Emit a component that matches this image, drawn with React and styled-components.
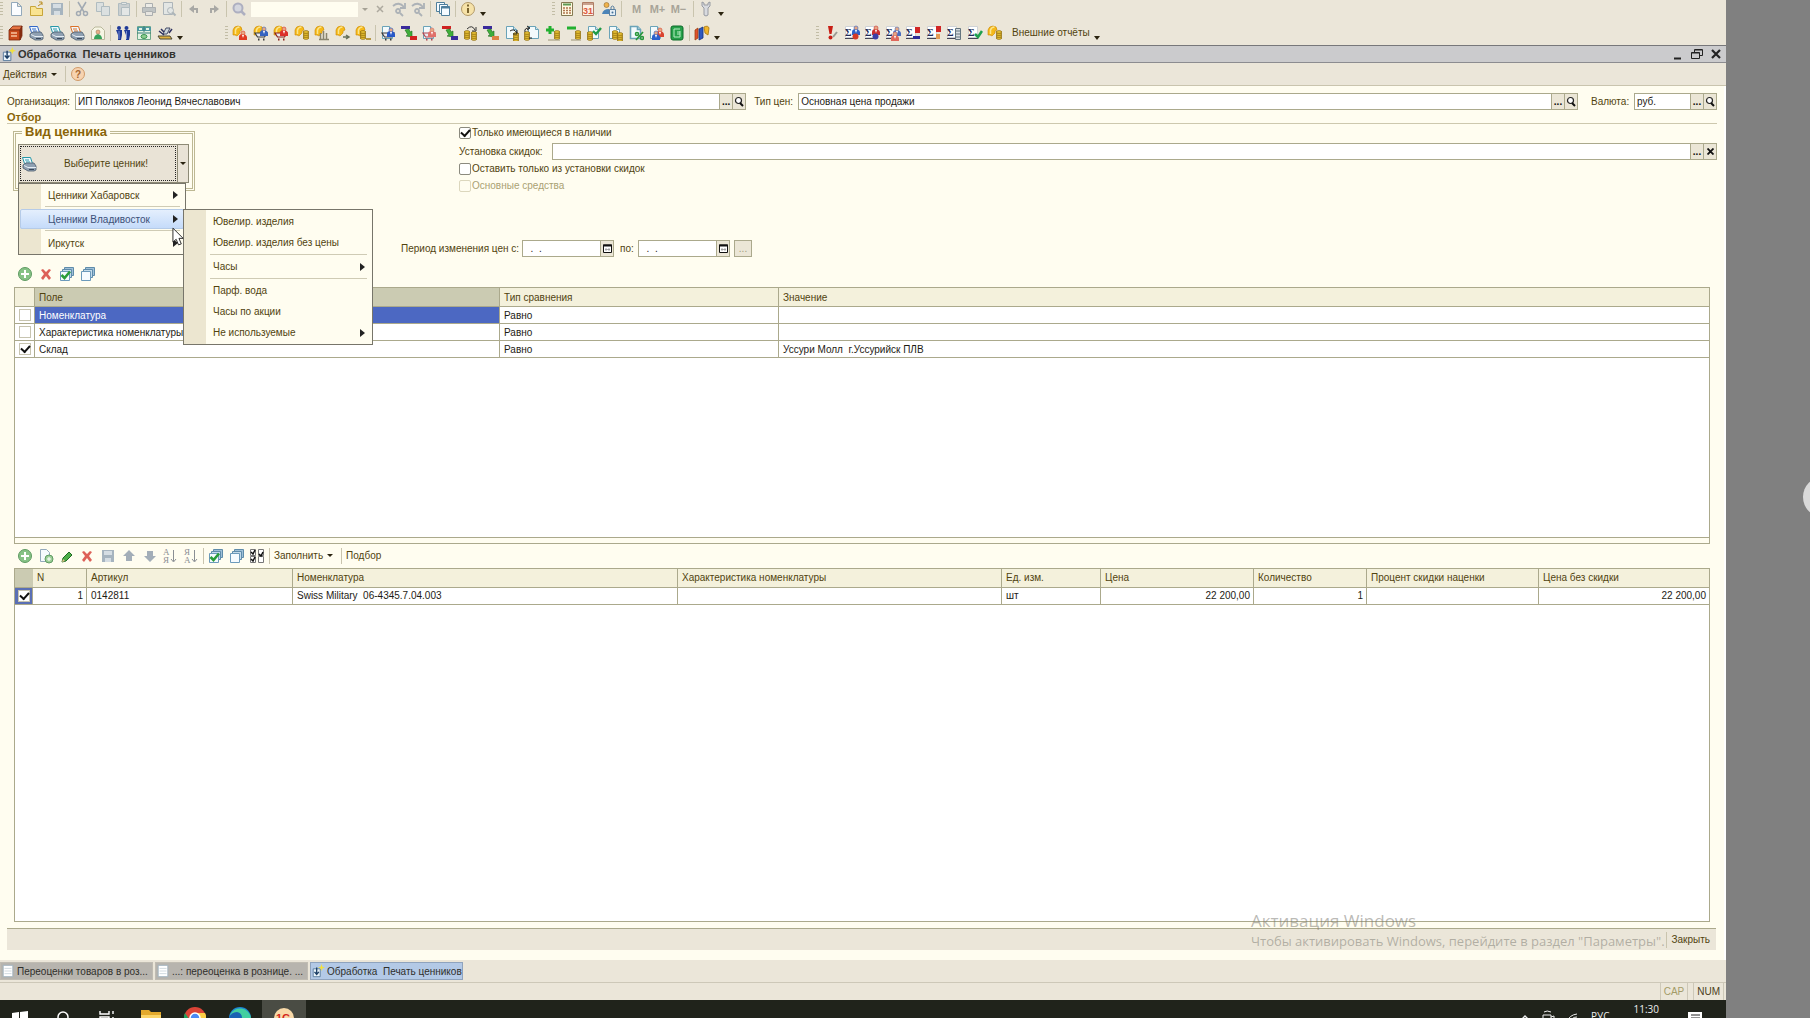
import { useState } from 'react';
import styled, { createGlobalStyle, css } from 'styled-components';

const line = '#aba98c';
const brown = '#51430f';

const GlobalStyle = createGlobalStyle`
   * {
      box-sizing: border-box;
   }
   body {
      margin: 0;
      background: #808080;
   }
   body, button, input, table {
      font-family: 'Liberation Sans', Arial, sans-serif;
      font-size: 10px;
      line-height: 13px;
      color: ${brown};
   }
   button {
      padding: 0;
      border: 0;
      background: none;
      white-space: nowrap;
   }
   svg {
      flex: none;
   }
`;

/* ---------- layout ---------- */

const Desktop = styled.div`
   display: flex;
   height: 100vh;
   overflow: hidden;
`;

const Screen = styled.main`
   flex: 1;
   min-width: 0;
   display: flex;
   flex-direction: column;
   background: #ebe6d9;
`;

const Gutter = styled.aside`
   flex: 0 0 84px;
   display: flex;
   align-items: center;
   justify-content: flex-end;
   overflow: hidden;
   background: #808080;
`;

const SideKnob = styled.button`
   flex: none;
   width: 40px;
   height: 40px;
   margin: 0 -33px 24px 0;
   border-radius: 50%;
   background: #d9d9d9;
`;

const Bar = styled.div`
   flex: none;
   display: flex;
   align-items: center;
   height: ${(p) => p.$height}px;
   padding-bottom: ${(p) => p.$bottom || 0}px;
`;

const Strip = styled.div`
   flex: none;
   display: flex;
   align-items: center;
   width: ${(p) => (p.$width ? `${p.$width}px` : 'auto')};
   margin-top: ${(p) => p.$top || 0}px;
`;

const Group = styled.div`
   flex: none;
   display: flex;
   justify-content: space-between;
   align-items: center;
   width: ${(p) => p.$width}px;
`;

const Handle = styled.span`
   flex: none;
   width: 3px;
   height: 14px;
   margin: 0 ${(p) => p.$right || 4}px 0 0;
   background: repeating-linear-gradient(#c2bda6 0 1px, transparent 1px 3px);
`;

const Sep = styled.span`
   flex: none;
   width: 1px;
   height: 16px;
   margin: 0 4px;
   background: #c9c4ae;
`;

const IconButton = styled.button`
   flex: none;
   display: block;
   width: 16px;
   height: 16px;
   opacity: ${(p) => (p.$dim ? 0.65 : 1)};

   svg {
      display: block;
   }
`;

const Caret = styled.span`
   flex: none;
   align-self: ${(p) => (p.$low ? 'flex-end' : 'center')};
   margin: ${(p) => (p.$low ? '0 4px 1px' : '0 4px')};
   border: solid transparent;
   border-width: ${(p) => (p.$low ? '4px 3px 0' : '3px 3px 0')};
   border-top-color: ${(p) => p.$color || '#2b2410'};
`;

const SearchInput = styled.input`
   width: 107px;
   height: 15px;
   margin-left: 4px;
   border: 0;
   background: #fffdf0;
`;

const MemoryButton = styled.button`
   width: 21px;
   color: #a8a498;
   font-weight: bold;
   font-size: 11px;
`;

const TextButton = styled.button`
   display: flex;
   align-items: center;
   color: ${brown};
`;

/* ---------- window ---------- */

const TitleBar = styled.header`
   flex: none;
   display: flex;
   align-items: center;
   height: 18px;
   padding: 0 2px 0 1px;
   border-top: 1px solid #77777a;
   border-bottom: 1px solid #8c8c90;
   background: #cbcbcd;
`;

const Title = styled.h1`
   flex: 1;
   margin: 0 0 0 2px;
   font-size: 11px;
   line-height: 13px;
   color: #33332f;
   white-space: pre;
`;

const WindowButtons = styled.div`
   display: flex;
   gap: 3px;
`;

const ActionBar = styled.div`
   flex: none;
   display: flex;
   align-items: center;
   height: 23px;
   padding-left: 3px;
   border-bottom: 1px solid #c9c4ae;
`;

const Form = styled.form`
   flex: 1;
   min-height: 0;
   display: flex;
   flex-direction: column;
   padding-bottom: 10px;
   border-right: 2px solid #fff;
   background: #fffdf0;
`;

const FieldRow = styled.div`
   display: flex;
   align-items: center;
   height: 17px;
   margin: 7px 7px 0;
`;

const Label = styled.label`
   flex: none;
   width: ${(p) => p.$width}px;
   margin-left: ${(p) => p.$left || 0}px;
   white-space: nowrap;
`;

const FieldBox = styled.div`
   flex: ${(p) => (p.$grow ? `${p.$grow} 1 0` : 'none')};
   display: flex;
   width: ${(p) => (p.$width ? `${p.$width}px` : 'auto')};
   height: 17px;
   border: 1px solid ${line};
   background: #fff;
`;

const FieldInput = styled.input`
   flex: 1;
   min-width: 0;
   padding: 0 2px;
   border: 0;
   background: transparent;
   color: #1d1b14;
   outline: 0;
`;

const FieldButton = styled.button`
   flex: none;
   display: flex;
   align-items: center;
   justify-content: center;
   width: 13px;
   border-left: 1px solid ${line};
   background: #ebe6d6;
   color: #111;
   font-weight: bold;
`;

const PeriodButton = styled.button`
   width: 18px;
   height: 17px;
   margin-left: 4px;
   border: 1px solid ${line};
   background: #ebe6d6;
   color: #a09a7c;
`;

const SectionTitle = styled.h2`
   height: 14px;
   margin: 0 7px;
   border-bottom: 1px solid #cdc8ae;
   font-size: 11px;
   line-height: 14px;
   color: #8a6508;
`;

const Filters = styled.div`
   display: flex;
   height: 108px;
   padding: 1px 7px 0 13px;
`;

const TagKind = styled.fieldset`
   flex: none;
   align-self: flex-start;
   width: 182px;
   min-width: 0;
   height: 66px;
   margin: 0;
   padding: 5px 2px 3px;
   border: 3px double #bdb893;

   legend {
      margin-left: 4px;
      padding: 0 3px;
      font-size: 13px;
      line-height: 14px;
      font-weight: bold;
      color: #8a6508;
   }
`;

const SplitButton = styled.div`
   position: relative;
   display: flex;
   width: 171px;
   height: 39px;
   border: 1px solid #8d8a76;
   background: #e9e3d6;
`;

const SplitMain = styled.button`
   flex: 1;
   display: flex;
   align-items: center;
   margin: 1px;
   border: 1px dotted #222;

   span {
      flex: 1;
   }
`;

const SplitArrow = styled.button`
   display: flex;
   align-items: center;
   justify-content: center;
   width: 11px;
   border-left: 1px solid #8d8a76;
`;

const Checks = styled.div`
   flex: 1;
   min-width: 0;
   margin-left: 264px;
`;

const CheckLabel = styled.label`
   display: flex;
   align-items: center;
   gap: 1px;
   height: ${(p) => p.$height || 17}px;
   color: ${(p) => (p.$disabled ? '#aaa173' : brown)};
`;

const Check = styled.input.attrs({ type: 'checkbox' })`
   appearance: none;
   flex: none;
   display: grid;
   place-items: center;
   width: 12px;
   height: 12px;
   margin: 0;
   border: 1px solid ${(p) => (p.$cell ? '#c7c4b0' : '#8b8a7e')};
   border-radius: ${(p) => (p.$cell ? 0 : 2)}px;
   background: #fff;

   &:disabled {
      border-color: #dcd7bd;
      background: #fffdf0;
   }

   &:checked::after {
      content: '';
      width: 7px;
      height: 4px;
      margin-top: -2px;
      border: solid #111;
      border-width: 0 0 2px 2px;
      transform: rotate(-48deg);
   }
`;

const PeriodRow = styled.div`
   flex: none;
   display: flex;
   align-items: center;
   height: 17px;
   margin-top: 8px;
   padding-left: 401px;
`;

const TableTools = styled.div`
   flex: none;
   display: flex;
   align-items: center;
   height: ${(p) => p.$height}px;
   padding: ${(p) => p.$top || 0}px 0 0 17px;
`;

/* ---------- menus ---------- */

const Menu = styled.ul`
   position: absolute;
   z-index: ${(p) => (p.$sub ? 3 : 2)};
   top: ${(p) => (p.$sub ? 25 : 38)}px;
   left: ${(p) => (p.$sub ? 164 : -1)}px;
   width: ${(p) => (p.$sub ? 190 : 168)}px;
   margin: 0;
   padding: 1px;
   border: 1px solid #77756a;
   background: linear-gradient(90deg, #ece6d0 22px, #fffdf0 22px);
   list-style: none;
`;

const MenuItem = styled.li`
   border-radius: 2px;

   ${(p) =>
      p.$active &&
      css`
         outline: 1px solid #b5cbe8;
         outline-offset: -1px;
         background: linear-gradient(#e6f0fd, #c3dafa);
      `}

   > button {
      display: flex;
      align-items: center;
      justify-content: space-between;
      width: 100%;
      height: ${(p) => (p.$tall ? 21 : 20)}px;
      padding: 0 6px 0 28px;
      color: ${(p) => (p.$active ? '#3c5078' : brown)};
   }
`;

const MenuSep = styled.li`
   height: ${(p) => (p.$tall ? 3 : 4)}px;
   padding: 1px 4px 0 25px;

   &::after {
      content: '';
      display: block;
      height: 1px;
      background: #cfcbb5;
   }
`;

const MenuArrow = styled.span`
   border: solid transparent;
   border-width: 4px 0 4px 5px;
   border-left-color: #222;
`;

const Pointer = styled.svg`
   position: absolute;
   z-index: 4;
   top: 82px;
   left: 153px;
   pointer-events: none;
`;

/* ---------- tables ---------- */

const TableFrame = styled.div`
   flex: ${(p) => p.$grow} 1 0;
   min-height: 0;
   margin: 0 14px;
   border: 1px solid ${line};
   background: #fff;
   overflow: hidden;
`;

const Splitter = styled.div`
   flex: none;
   height: 6px;
   margin: 0 14px;
   border: 1px solid ${line};
   border-top: 0;
`;

const Grid = styled.table`
   width: 100%;
   table-layout: fixed;
   border-collapse: separate;
   border-spacing: 0;
   color: #1d1b14;

   th, td {
      height: 17px;
      padding: 0 3px 0 4px;
      border: solid ${line};
      border-width: 0 1px 1px 0;
      text-align: left;
      white-space: pre;
      overflow: hidden;
   }
   th:last-child, td:last-child {
      border-right: 0;
   }
   th {
      height: ${(p) => p.$head}px;
      background: #f4f1dc;
      color: ${brown};
      font-weight: normal;
   }
`;

const HeadCell = styled.th`
   && {
      background: ${(p) => (p.$picked ? '#cbcbb2' : '#f4f1dc')};
      ${(p) => p.$open && 'border-right: 0;'}
   }
`;

const Cell = styled.td`
   && {
      ${(p) => p.$right && 'text-align: right;'}
      ${(p) => p.$picked && 'background: #4c68c2; color: #fff;'}
   }
`;

const CheckCell = styled.td`
   && {
      padding: 0 0 0 ${(p) => (p.$picked ? 3 : 4)}px;
      background: ${(p) => (p.$picked ? '#5a6fb5' : '#fff')};
   }
`;

/* ---------- bottom ---------- */

const CloseBar = styled.div`
   flex: none;
   position: relative;
   display: flex;
   align-items: center;
   justify-content: flex-end;
   height: 22px;
   margin: 6px 8px 0 7px;
   padding-right: 6px;
   border-top: 1px solid ${line};
   background: #ebe6d9;
`;

const Watermark = styled.div`
   position: absolute;
   right: 57px;
   top: -19px;
   width: 408px;
   font-family: 'Open Sans', sans-serif;
   font-size: 13px;
   line-height: 18px;
   color: rgba(120, 118, 110, 0.5);
   white-space: nowrap;
   pointer-events: none;

   strong {
      display: block;
      font-size: 17px;
      line-height: 22px;
      font-weight: normal;
   }
`;

const WindowTabs = styled.nav`
   flex: none;
   display: flex;
   gap: 2px;
   height: 22px;
   padding: 2px 0;
`;

const WindowTab = styled.button`
   display: flex;
   align-items: center;
   gap: 2px;
   width: 153px;
   height: 18px;
   border: 1px solid ${(p) => (p.$active ? '#8fa3bd' : '#c0bcb2')};
   background: ${(p) => (p.$active ? '#b3c9e6' : '#b7b4ae')};
   color: #2f2f2b;
   white-space: pre;
`;

const StatusBar = styled.footer`
   flex: none;
   display: flex;
   justify-content: flex-end;
   gap: 5px;
   height: 18px;
   padding-right: 2px;
   border-top: 1px solid #cdc8b8;
`;

const StatusCell = styled.span`
   padding: 2px 3px 0;
   border: solid #cdc8b8;
   border-width: 0 1px;
   color: ${(p) => (p.$off ? '#a39c68' : '#4b4020')};
`;

const Taskbar = styled.div`
   flex: none;
   display: flex;
   align-items: flex-start;
   justify-content: space-between;
   height: 18px;
   overflow: hidden;
   background: #20231b;
   color: #eee;
   font-family: 'Open Sans', sans-serif;
`;

const TaskButton = styled.button`
   display: flex;
   justify-content: center;
   width: ${(p) => p.$width || 44}px;
   height: 40px;
   padding-top: ${(p) => p.$top || 8}px;
   background: ${(p) => (p.$active ? '#4a4c44' : 'transparent')};
`;

const Tray = styled.div`
   display: flex;
   align-items: flex-start;
   padding-right: 17px;

   span {
      margin: 10px 24px 0 8px;
   }
   time {
      margin: 3px 24px 0 0;
   }
   svg {
      margin: 8px 3px 0;
   }
`;

/* ---------- icon parts ---------- */

const Page = ({ x = 2, y = 1 }) => (
   <g transform={`translate(${x} ${y})`}>
      <path d="M.5.5h7l3 3v9H.5z" fill="#f3fafc" stroke="#6aa3b8" />
      <path d="M7.5.5v3h3" fill="#cfe4ec" stroke="#6aa3b8" />
   </g>
);

const Man = ({ x = 7, y = 6, color }) => (
   <g transform={`translate(${x} ${y})`}>
      <path d="M0 9V6q0-3 3.500-3T8 6v3z" fill={color} />
      <circle cx="4" cy="2" r="2" fill="#e7a884" stroke={color} strokeWidth=".6" />
      <path d="M3 4l1 3 1-3z" fill="#fff" />
   </g>
);

const Coins = ({ x = 8, y = 6 }) => (
   <g fill="#f2cc3a" stroke="#8d6a0a" strokeWidth=".8">
      {[7, 5, 3, 1].map((dy) => (
         <ellipse key={dy} cx={x + 3} cy={y + dy} rx="2.800" ry="1.300" />
      ))}
   </g>
);

// open purse, the small one leaves room for a badge
const Purse = () => (
   <g>
      <path d="M1 10V5q1-4 5-4 4 0 4 4L8 6v2l-3 3-2-1z" fill="#f5b91a" stroke="#c98808" strokeWidth=".6" />
      <path d="M3.500 9V5q1-3 4-3" stroke="#fbe58c" fill="none" strokeWidth="1.500" />
   </g>
);

const Cart = ({ color = '#3a3a3a' }) => (
   <g fill="none" stroke={color}>
      <path d="M2 8h12l-2.500 4h-7z" strokeWidth="1.200" fill="#e9e9ee" />
      <path d="M5 14.500h1.500M10 14.500h1.500" strokeWidth="2" />
   </g>
);

const Sigma = () => (
   <g>
      <path d="M1.500 1.500h9v11h-9z" fill="#fff" stroke="#cfd3d6" />
      <path d="M1 13.500h10" stroke="#445" />
      <text x="1" y="11" fontSize="10" fontFamily="Liberation Serif, serif" fontWeight="bold" fill="#222c58">
         Σ
      </text>
   </g>
);

const Printer = ({ color }) => (
   <g>
      <path d="M1.500 1.500h8l2 6h-8z" fill="#eef7fd" stroke={color} />
      <path d="M4 4h4M5 6h4" stroke={color} />
      <path d="M2 9l3-2h8l2 3v4l-2 1H7l-5-3z" fill="#8fa0b2" stroke="#4a5a6c" strokeWidth=".8" />
      <path d="M3 9.500l4 2h8" stroke="#e5edf4" fill="none" />
      <path d="M8 13.500h5" stroke="#39475a" />
   </g>
);

const Stack = ({ checked }) => (
   <g>
      <path d="M5.500 1.500h9v8h-9z" fill="#9fc0d8" stroke="#5f8cab" />
      <path d="M3.500 3.500h9v8h-9z" fill="#c4dbea" stroke="#5f8cab" />
      <path d="M1.500 5.500h9v9h-9z" fill="#f6fbff" stroke="#6c9abb" />
      {checked && <path d="M2.500 9l3 3L11 5.500" fill="none" stroke="#2a9d3a" strokeWidth="2.600" />}
   </g>
);

const Flow = ({ a, b }) => (
   <g>
      <path d="M0 1h9v3H0z" fill={a} />
      <path d="M4 5l4-1 1 3 2-1v6l-6-1 2-1z" fill="#3fae3a" stroke="#1d6b20" strokeWidth=".6" />
      <path d="M9 11h7v4H9z" fill={b} />
   </g>
);

const Sort = ({ top, bottom }) => (
   <g fill="#8b8f94" fontSize="9" fontFamily="Liberation Serif, serif">
      <text x="1" y="7">{top}</text>
      <text x="1" y="15">{bottom}</text>
      <path d="M11.500 2v11M9 11l2.500 3 2.500-3" fill="none" stroke="#8b8f94" />
   </g>
);

const icons = {
   page: <path d="M3.500 1.500h6l4 4v9h-10zM9.500 1.500v4h4" fill="#fbfdff" stroke="#93a9bb" />,
   folder: (
      <g>
         <path d="M1.500 5.500h5l1 2h6v7h-12z" fill="#f9e391" stroke="#c7a53a" />
         <path d="M9 5l4-3M10 1h3v3" fill="none" stroke="#b98c20" />
      </g>
   ),
   save: (
      <g>
         <path d="M2 2h12v12H2z" fill="#a6b4bf" />
         <path d="M4 3h8v4H4zM5 10h6v4H5z" fill="#d5dde3" />
      </g>
   ),
   cut: (
      <g fill="none" stroke="#7c8ba0" strokeWidth="1.500">
         <path d="M4 1l6 10M12 1L6 11" />
         <circle cx="4.500" cy="12.500" r="2" />
         <circle cx="11.500" cy="12.500" r="2" />
      </g>
   ),
   copy: (
      <g fill="#d3dde4" stroke="#92a6b4">
         <path d="M1.500 1.500h7v9h-7z" />
         <path d="M6.500 5.500h8v9h-8z" />
      </g>
   ),
   paste: (
      <g stroke="#92a6b4">
         <path d="M2.500 2.500h11v12h-11z" fill="#b9c4cc" />
         <path d="M5.500 1.500h5v2h-5zM5.500 6.500h8v8h-8z" fill="#dfe7ec" />
      </g>
   ),
   print: (
      <g stroke="#8a929b">
         <path d="M4.500 2.500h7v4h-7z" fill="#eee" />
         <path d="M1.500 6.500h13v5h-13z" fill="#a9b1b8" />
         <path d="M4.500 10.500h7v4h-7z" fill="#e5e5e5" />
      </g>
   ),
   preview: (
      <g stroke="#8c9ba8" fill="#dfe6ea">
         <path d="M2.500 1.500h9v12h-9z" />
         <circle cx="9.500" cy="9.500" r="3" />
         <path d="M11.500 11.500l3 3" strokeWidth="2" />
      </g>
   ),
   undo: <path d="M3 8l5-4v3h4v5h-2V9H8v3z" fill="#85878a" />,
   redo: <path d="M13 8L8 4v3H4v5h2V9h2v3z" fill="#85878a" />,
   lens: (
      <g stroke="#8d92b4" fill="#c9cee2">
         <circle cx="7" cy="7" r="4.500" strokeWidth="2" />
         <path d="M10 10l4 4" strokeWidth="2.500" />
      </g>
   ),
   clear: <path d="M5 5l6 6M11 5l-6 6" stroke="#8c8980" strokeWidth="1.500" />,
   findNext: (
      <g fill="none" stroke="#8c97a6" strokeWidth="1.800">
         <path d="M2 5q6-5 11 1" />
         <path d="M14 2v5H9" />
         <circle cx="7" cy="10" r="2" />
         <path d="M9 12l3 3" />
      </g>
   ),
   windows: (
      <g stroke="#4f7f9c" fill="#f5fbff">
         <path d="M1.500 1.500h8v9h-8z" />
         <path d="M4.500 3.500h8v9h-8z" />
         <path d="M6.500 5.500h8v9h-8z" />
         <path d="M6.500 6.500h8" strokeWidth="2" />
      </g>
   ),
   info: (
      <g>
         <circle cx="8" cy="8" r="6.500" fill="#f6e2a8" stroke="#b39a68" />
         <path d="M8 7v5M8 3.500v2" stroke="#7a6430" strokeWidth="2" />
      </g>
   ),
   help: (
      <g>
         <circle cx="8" cy="8" r="6.500" fill="#f7d3b0" stroke="#d09a68" />
         <text x="5" y="12" fontSize="10" fontWeight="bold" fill="#a5652f">?</text>
      </g>
   ),
   calc: (
      <g>
         <path d="M2.500 1.500h11v13h-11z" fill="#fff8e0" stroke="#857a52" />
         <path d="M4 3.500h8" stroke="#5d9a54" strokeWidth="2" />
         <path d="M4 7h8M4 9.500h8M4 12h8" stroke="#b0744e" strokeDasharray="2 1" strokeWidth="1.500" />
      </g>
   ),
   calendar: (
      <g>
         <path d="M2.500 1.500h11v13h-11z" fill="#fff1e4" stroke="#b07d64" />
         <path d="M3 3h10" stroke="#c9a18e" strokeWidth="2" />
         <text x="3" y="13" fontSize="9" fontWeight="bold" fill="#dc5a40">31</text>
      </g>
   ),
   users: (
      <g>
         <circle cx="5.500" cy="4" r="2.500" fill="#efb24c" stroke="#8d6a30" strokeWidth=".6" />
         <path d="M1 13q1-5 7-5v5z" fill="#4b84b8" />
         <path d="M8.500 8.500h6v6h-6z" fill="#e3edf5" stroke="#5b80a0" />
         <path d="M10 8V6q1.500-2 3 0v2" fill="none" stroke="#5b80a0" />
         <circle cx="11.500" cy="11.500" r="1" fill="#42719a" />
      </g>
   ),
   wrench: <path d="M4 1v4l2 2v7q2 2 4 0V7l2-2V1l-2 1v2H6V2z" fill="#d8dadf" stroke="#989ba2" />,
   book: (
      <g stroke="#7a2a10" strokeWidth=".8">
         <path d="M2 5l4-4h9l-2 4z" fill="#e57443" />
         <path d="M2 5h11v10H2z" fill="#c84a1c" />
         <path d="M13 5l2-4v10l-2 4z" fill="#8c2f10" />
         <path d="M4 8h6M4 11h6" stroke="#f6c29f" strokeWidth="1.500" />
      </g>
   ),
   printBlue: <Printer color="#3468c8" />,
   printTeal: <Printer color="#2798a8" />,
   printOrange: <Printer color="#dc7128" />,
   house: (
      <g>
         <path d="M1.500 5.500L5 2h6l3.500 3.500v9h-13z" fill="#f6f5e4" stroke="#b9b99c" />
         <path d="M4 14q0-4 4-5 4 1 4 5z" fill="#36a25a" />
         <circle cx="8" cy="7" r="2" fill="#e9b088" stroke="#8a6a4a" strokeWidth=".5" />
      </g>
   ),
   people: (
      <g fill="#1f3a98">
         <circle cx="4" cy="3" r="2" />
         <circle cx="11.500" cy="3" r="2" />
         <path d="M1 5h6v5l-1 5H3V10zM9 5h6v5l-1 5h-3V10z" />
         <path d="M4 6v8M11.500 6v8" stroke="#8fa3e0" strokeWidth=".8" />
      </g>
   ),
   money: (
      <g>
         <path d="M1.500 1.500h13v13h-13z" fill="#e4f3e4" stroke="#6fa98a" />
         <path d="M1 2h14v4H1z" fill="#4d98a0" />
         <path d="M3 4h3M10 4h3" stroke="#e4f3e4" strokeWidth="2" />
         <path d="M8 1v6M1 8h14" stroke="#3b7f78" />
         <ellipse cx="8" cy="11.500" rx="3" ry="2" fill="#8dcb90" stroke="#3c9655" />
      </g>
   ),
   scanner: (
      <g>
         <path d="M6 9l3-6h4l-3 6z" fill="#ccd5dc" stroke="#454c66" />
         <path d="M1 11h12l2 3H3z" fill="#e0b13c" stroke="#4b4937" />
         <path d="M2 6l5 4M4 4l3 3M12 8l3-4" stroke="#2d3160" strokeWidth="1.500" />
      </g>
   ),
   purseRed: <g><Purse /><Man x={7} y={6} color="#e03a22" /></g>,
   purseBlue: <g><Purse /><Cart /><Man x={7} y={2} color="#3563c0" /></g>,
   purseCart: <g><Purse /><Cart color="#8a1f18" /><Man x={7} y={2} color="#dc2f2a" /></g>,
   purseCoins: <g><Purse /><Coins x={9} /></g>,
   purseChart: <g><Purse /><path d="M6.500 14V8M9.500 14V6M12.500 14V8M5 14.500h10" stroke="#88846e" strokeWidth="1.500" /></g>,
   purseArrow: <g><Purse /><path d="M8 12h6M11 10l3 2-3 2" stroke="#66705a" strokeWidth="1.500" fill="none" /></g>,
   purseLine: <g><Purse /><Coins x={5} /><path d="M11 14h5" stroke="#a67f15" strokeWidth="1.500" /></g>,
   pageBlue: <g><Page /><Cart /><Man x={7} y={3} color="#2758c8" /></g>,
   flowRed: <Flow a="#3a2a9c" b="#d32222" />,
   pageRed: <g><Page /><Cart color="#b04550" /><Man x={7} y={3} color="#e0706a" /></g>,
   flowBlue: <Flow a="#cf2222" b="#3a2a9c" />,
   coinsTurn: <g><Coins x={1} y={6} /><Coins x={8} y={7} /><path d="M4 4q5-5 8 1M13 2v4H9" fill="none" stroke="#333" /></g>,
   flowOrange: <Flow a="#3a2a9c" b="#dd8244" />,
   pageTurn: <g><Page /><Coins x={9} y={8} /><path d="M6 6q4-3 7 2M13 5v4h-4" fill="none" stroke="#222" /></g>,
   pageBack: <g><Page x={4} /><Coins x={0} y={7} /><path d="M5 3Q0 3 1 7M5 13h3M3 1l3 2-3 2" fill="none" stroke="#222" /></g>,
   coinsPlus: <g><path d="M5 1v8M1 5h8" stroke="#22b030" strokeWidth="3" /><Coins x={9} y={6} /><path d="M3 15h12" stroke="#9b9476" /></g>,
   coinsMinus: <g><path d="M1 3h9" stroke="#22b030" strokeWidth="3" /><Coins x={9} y={6} /><path d="M5 15h10" stroke="#9b9476" /></g>,
   pageCheck: <g><Page /><Coins x={1} y={7} /><path d="M7 6l3 3 5-6" fill="none" stroke="#1f9b48" strokeWidth="2.400" /></g>,
   pageCoins: <g><Page /><Coins x={5} y={6} /><Coins x={10} y={8} /></g>,
   pagePercent: (
      <g fill="none" stroke="#27963a" strokeWidth="1.600">
         <Page />
         <path d="M8 15l7-8" />
         <circle cx="9" cy="9" r="1.500" />
         <circle cx="14" cy="13" r="1.500" />
      </g>
   ),
   pagePeople: <g><Page /><Man x={8} y={3} color="#da4430" /><Man x={4} y={6} color="#2a60cc" /></g>,
   greenBook: (
      <g>
         <rect x="2" y="1" width="12" height="14" rx="2" fill="#26a04a" stroke="#0d6b2b" />
         <path d="M5 4v8h6V6M5 4h6M8 7h3M8 9h3" fill="none" stroke="#b6ecc2" />
      </g>
   ),
   binders: (
      <g strokeWidth=".8">
         <path d="M1 5l3-2v10l-3 2z" fill="#e0502c" stroke="#9c4310" />
         <path d="M5 4l4-2v11l-4 2z" fill="#2e58c0" stroke="#14307c" />
         <path d="M10 2q4-2 5 1l-1 7-3-2z" fill="#f0b62c" stroke="#a87408" />
      </g>
   ),
   alert: (
      <g>
         <path d="M5 1h5l-1.500 8h-2z" fill="#c81e14" />
         <circle cx="7.500" cy="12.500" r="2" fill="#c81e14" />
         <path d="M10 12l4-5" stroke="#9a9a92" strokeWidth="2" />
      </g>
   ),
   sumBlue: <g><Sigma /><Man x={8} y={1} color="#2f62c8" /><circle cx="11.500" cy="11.500" r="3" fill="#d43b28" /></g>,
   sumRed: <g><Sigma /><Man x={8} y={1} color="#cb3030" /><circle cx="11.500" cy="11.500" r="3" fill="#3c3fa8" /></g>,
   sumPair: <g><Sigma /><Man x={8} y={2} color="#4c6fc0" /><Man x={6} y={7} color="#e0685c" /></g>,
   sumFlow: <g><Sigma /><path d="M10 2h5v6h-5z" fill="#d12626" /><path d="M8 11h7v3H8z" fill="#2d2c98" /></g>,
   sumFlag: <g><Sigma /><path d="M10 1h5v6h-5z" fill="#d12626" /><path d="M10 9h4v5h-4z" fill="#e39c55" /></g>,
   sumList: <g><Sigma /><path d="M9.500 3.500h5v11h-5zM10 6h4M10 9h4M10 12h4" fill="#d8dde0" stroke="#63747f" /></g>,
   sumCheck: <g><Sigma /><path d="M8 9l3 3 4-6" fill="none" stroke="#1fa04e" strokeWidth="2.600" /></g>,
   add: (
      <g>
         <circle cx="8" cy="8" r="6.500" fill="#86c286" stroke="#5f9b62" />
         <path d="M8 4v8M4 8h8" stroke="#fff" strokeWidth="2" />
      </g>
   ),
   addPage: (
      <g>
         <path d="M2.500 1.500h6l3 3v9h-9z" fill="#f6fafc" stroke="#93a9bb" />
         <circle cx="11" cy="11" r="4" fill="#9ccf98" stroke="#5f9b62" />
         <path d="M11 9v4M9 11h4" stroke="#fff" />
      </g>
   ),
   pencil: (
      <g>
         <path d="M4 10l6-6 3 3-6 6-4 1z" fill="#4cae48" stroke="#1e6a22" />
         <path d="M3 14l1-3 2 2z" fill="#e6c58c" />
      </g>
   ),
   remove: <path d="M3 4l2-1 3 3 3-3 2 1-3 4 3 4-2 2-3-4-3 4-2-2 3-4z" fill="#dd6158" />,
   up: <path d="M8 2l6 6h-3v5H5V8H2z" fill="#a3aeb8" />,
   down: <path d="M8 14l6-6h-3V3H5v5H2z" fill="#a3aeb8" />,
   sortUp: <Sort top="А" bottom="Я" />,
   sortDown: <Sort top="Я" bottom="А" />,
   checkAll: <Stack checked />,
   uncheckAll: <Stack />,
   invert: (
      <g fill="#fff" stroke="#777">
         <path d="M1.500 1.500h5v6h-5zM1.500 8.500h5v6h-5zM9.500 1.500h5v6h-5zM9.500 8.500h5v6h-5z" />
         <path d="M2 4l2 2 2-4M2 11l2 2 2-4M10 6l2 2 2-4" fill="none" stroke="#111" strokeWidth="1.500" />
      </g>
   ),
   processing: (
      <g>
         <path d="M2.500 5.500h8v9h-8z" fill="#eaf4fa" stroke="#55789a" />
         <path d="M6.500 4v8M4 9l2.500 3L9 9" fill="none" stroke="#1c3f66" strokeWidth="1.500" />
         <path d="M12 0l1 3 3 1-3 1-1 3-1-3-3-1 3-1z" fill="#f1e040" />
      </g>
   ),
   sheet: (
      <g>
         <path d="M2.500 1.500h11v13h-11z" fill="#fff" stroke="#9db0bd" />
         <path d="M4 5h8M4 8h8M4 11h8" stroke="#cbd6dc" />
      </g>
   ),
   minimize: <path d="M4 12.500h7" stroke="#222" strokeWidth="2" />,
   restore: <path d="M5.500 6V3.500h8v6H11M2.500 6.500h8v6h-8zM2.500 7h8M6 4h7" fill="none" stroke="#222" />,
   close: <path d="M4 4l8 8M12 4l-8 8" stroke="#222" strokeWidth="2.200" />,
};

const Glyph = ({ name, size = 16 }) => (
   <svg width={size} height={size} viewBox="0 0 16 16" aria-hidden="true">
      {icons[name]}
   </svg>
);

function Tools({ names, width, dim }) {
   return (
      <Group $width={width}>
         {names.split(' ').map((name, i) => (
            <IconButton key={i} type="button" aria-label={name} $dim={dim}>
               <Glyph name={name} />
            </IconButton>
         ))}
      </Group>
   );
}

const SearchGlyph = () => (
   <svg width="10" height="11" viewBox="0 0 10 11" aria-hidden="true">
      <circle cx="4.500" cy="4.500" r="3" fill="#fff" stroke="#222" strokeWidth="1.200" />
      <path d="M6 7l3 3" stroke="#111" strokeWidth="2" />
   </svg>
);

const CalendarGlyph = () => (
   <svg width="9" height="9" viewBox="0 0 9 9" aria-hidden="true">
      <path d="M.5 1h8v7.500h-8z" fill="#fff" stroke="#111" />
      <path d="M0 1.500h9" stroke="#111" strokeWidth="2" />
      <path d="M3 4v3M6 4v3M2 5.500h5" stroke="#888" strokeWidth=".7" />
   </svg>
);

function Field({ id, value = '', buttons, grow, width, label }) {
   return (
      <FieldBox $grow={grow} $width={width}>
         <FieldInput id={id} defaultValue={value} />
         {buttons.map((kind) => (
            <FieldButton key={kind} type="button" aria-label={`${label}: ${kind}`}>
               {kind === 'pick' && '...'}
               {kind === 'find' && <SearchGlyph />}
               {kind === 'date' && <CalendarGlyph />}
               {kind === 'clear' && (
                  <svg width="7" height="7" viewBox="0 0 7 7" aria-hidden="true">
                     <path d="M.5.5l6 6M6.500.5l-6 6" stroke="#111" strokeWidth="1.800" />
                  </svg>
               )}
            </FieldButton>
         ))}
      </FieldBox>
   );
}

const submenu = ['Ювелир. изделия', 'Ювелир. изделия без цены', '-', 'Часы>', '-', 'Парф. вода', 'Часы по акции', 'Не используемые>'];

function PriceTagMenu() {
   return (
      <Menu>
         <MenuItem>
            <button type="button">Ценники Хабаровск <MenuArrow /></button>
         </MenuItem>
         <MenuSep />
         <MenuItem $active>
            <button type="button">Ценники Владивосток <MenuArrow /></button>
            <Menu $sub>
               {submenu.map((item, i) =>
                  item === '-' ? (
                     <MenuSep key={i} $tall />
                  ) : (
                     <MenuItem key={i} $tall>
                        <button type="button">
                           {item.replace('>', '')}
                           {item.endsWith('>') && <MenuArrow />}
                        </button>
                     </MenuItem>
                  )
               )}
            </Menu>
         </MenuItem>
         <MenuSep />
         <MenuItem>
            <button type="button">Иркутск <MenuArrow /></button>
         </MenuItem>
      </Menu>
   );
}

const filterRows = [
   { field: 'Номенклатура', value: '', on: false, picked: true },
   { field: 'Характеристика номенклатуры', value: '', on: false },
   { field: 'Склад', value: 'Уссури Молл  г.Уссурийск ПЛВ', on: true },
];

function FilterTable() {
   const [rows, setRows] = useState(filterRows);

   function handleToggle(index) {
      setRows(rows.map((row, i) => (i === index ? { ...row, on: !row.on } : row)));
   }

   return (
      <Grid $head={19}>
         <colgroup>
            <col style={{ width: 20 }} />
            <col style={{ width: 465 }} />
            <col style={{ width: 279 }} />
            <col />
         </colgroup>
         <thead>
            <tr>
               <th></th>
               <HeadCell $picked>Поле</HeadCell>
               <th>Тип сравнения</th>
               <th>Значение</th>
            </tr>
         </thead>
         <tbody>
            {rows.map((row, i) => (
               <tr key={row.field}>
                  <CheckCell>
                     <Check $cell aria-label={row.field} checked={row.on} onChange={() => handleToggle(i)} />
                  </CheckCell>
                  <Cell $picked={row.picked}>{row.field}</Cell>
                  <td>Равно</td>
                  <td>{row.value}</td>
               </tr>
            ))}
         </tbody>
      </Grid>
   );
}

function GoodsTable() {
   const widths = [18, 54, 206, 385, 324, 99, 153, 113, 172];

   return (
      <Grid $head={19}>
         <colgroup>
            {widths.map((width, i) => (
               <col key={i} style={{ width }} />
            ))}
            <col />
         </colgroup>
         <thead>
            <tr>
               <HeadCell $picked $open></HeadCell>
               <th>N</th>
               <th>Артикул</th>
               <th>Номенклатура</th>
               <th>Характеристика номенклатуры</th>
               <th>Ед. изм.</th>
               <th>Цена</th>
               <th>Количество</th>
               <th>Процент скидки наценки</th>
               <th>Цена без скидки</th>
            </tr>
         </thead>
         <tbody>
            <tr>
               <CheckCell $picked>
                  <Check $cell aria-label="0142811" defaultChecked />
               </CheckCell>
               <Cell $right>1</Cell>
               <td>0142811</td>
               <td>{'Swiss Military  06-4345.7.04.003'}</td>
               <td></td>
               <td>шт</td>
               <Cell $right>22 200,00</Cell>
               <Cell $right>1</Cell>
               <td></td>
               <Cell $right>22 200,00</Cell>
            </tr>
         </tbody>
      </Grid>
   );
}

function TopBars() {
   return (
      <>
         <Bar $height={20} $bottom={2}>
            <Strip $width={552}>
               <Handle $right={5} />
               <Tools width={57} names="page folder save" />
               <Sep />
               <Tools width={58} names="cut copy paste" dim />
               <Sep />
               <Tools width={36} names="print preview" dim />
               <Sep />
               <Tools width={36} names="undo redo" dim />
               <Sep />
               <Tools width={16} names="lens" dim />
               <SearchInput aria-label="Поиск" />
               <Caret $color="#a5a195" />
               <Tools width={54} names="clear findNext findNext" dim />
               <Sep />
               <Tools width={16} names="windows" />
               <Sep />
               <Tools width={16} names="info" />
               <Caret $low />
            </Strip>
            <Strip>
               <Handle />
               <Tools width={58} names="calc calendar users" />
               <Sep />
               <MemoryButton type="button">M</MemoryButton>
               <MemoryButton type="button">M+</MemoryButton>
               <MemoryButton type="button">M−</MemoryButton>
               <Sep />
               <Tools width={16} names="wrench" />
               <Caret $low />
            </Strip>
         </Bar>
         <Bar $height={25}>
            <Strip $width={225}>
               <Handle />
               <Tools width={99} names="book printBlue printTeal printOrange house" />
               <Sep />
               <Tools width={58} names="people money scanner" />
               <Caret $low />
            </Strip>
            <Strip $width={591}>
               <Handle />
               <Tools width={139} names="purseRed purseBlue purseCart purseCoins purseChart purseArrow purseLine" />
               <Sep />
               <Tools
                  width={305}
                  names="pageBlue flowRed pageRed flowBlue coinsTurn flowOrange pageTurn pageBack coinsPlus coinsMinus pageCheck pageCoins pagePercent pagePeople greenBook"
               />
               <Sep />
               <Tools width={16} names="binders" />
               <Caret $low />
            </Strip>
            <Strip>
               <Handle />
               <Tools width={180} names="alert sumBlue sumRed sumPair sumFlow sumFlag sumList sumCheck purseCoins" />
               <Sep style={{ visibility: 'hidden' }} />
               <TextButton type="button">Внешние отчёты</TextButton>
               <Caret $low />
            </Strip>
         </Bar>
      </>
   );
}

function SystemTaskbar() {
   return (
      <Taskbar>
         <Group $width={306}>
            <TaskButton aria-label="Пуск" $width={40} $top={11}>
               <svg width="16" height="16" viewBox="0 0 16 16">
                  <path d="M0 2l7-1v7H0zM8 1l8-1v8H8zM0 9h7v6l-7-1zM8 9h8v7l-8-1z" fill="#fff" />
               </svg>
            </TaskButton>
            <TaskButton aria-label="Поиск" $top={11}>
               <svg width="14" height="16" viewBox="0 0 14 16" fill="none" stroke="#fff" strokeWidth="1.500">
                  <circle cx="8" cy="6" r="5" />
                  <path d="M5 10l-3 5" />
               </svg>
            </TaskButton>
            <TaskButton aria-label="Представление задач" $top={11}>
               <svg width="16" height="16" viewBox="0 0 16 16" fill="none" stroke="#fff" strokeWidth="1.400">
                  <path d="M1 0v3h9V0M1 15V6h9v9M14 0v3M14 6v9" />
               </svg>
            </TaskButton>
            <TaskButton aria-label="Проводник" $top={10}>
               <svg width="20" height="18" viewBox="0 0 20 18">
                  <path d="M0 0h8l2 2h10v16H0z" fill="#e3a92c" />
                  <path d="M0 5h20v13H0z" fill="#fbd468" />
               </svg>
            </TaskButton>
            <TaskButton aria-label="Chrome" $top={7}>
               <svg width="22" height="22" viewBox="0 0 22 22">
                  <circle cx="11" cy="11" r="11" fill="#dc4437" />
                  <path d="M1 6l6 9 3 7A11 11 0 0 1 1 6z" fill="#1fa15d" />
                  <path d="M21 6H11l4 8-5 8A11 11 0 0 0 21 6z" fill="#fcce45" />
                  <circle cx="11" cy="11" r="5" fill="#4a8af4" stroke="#fff" strokeWidth="1.500" />
               </svg>
            </TaskButton>
            <TaskButton aria-label="Edge" $top={7}>
               <svg width="22" height="22" viewBox="0 0 22 22">
                  <circle cx="11" cy="11" r="11" fill="#1b87d6" />
                  <path d="M1 8A11 11 0 0 1 22 11q0 4-6 4-4-1-3-4-2-5-12-3z" fill="#43cfa0" />
                  <path d="M0 11q2-6 8-6 5 1 5 6H8v6z" fill="#1a62b3" />
               </svg>
            </TaskButton>
            <TaskButton aria-label="1С:Предприятие" $active $top={8}>
               <svg width="20" height="20" viewBox="0 0 20 20">
                  <circle cx="10" cy="10" r="10" fill="#f8d9a8" />
                  <text x="2" y="14" fontSize="11" fontWeight="bold" fill="#d3261c">1С</text>
               </svg>
            </TaskButton>
         </Group>
         <Tray>
            <svg width="14" height="14" viewBox="0 0 14 14" fill="none" stroke="#eee" strokeWidth="1.400">
               <path d="M3 12l4-4 4 4" />
            </svg>
            <svg width="20" height="14" viewBox="0 0 20 14" fill="none" stroke="#eee">
               <path d="M5 7h8v7H5zM6 4q3-2 7 0M13 9l3-1v5" />
            </svg>
            <svg width="16" height="14" viewBox="0 0 16 14" fill="none" stroke="#eee">
               <path d="M3 14Q5 7 13 6M6 14q2-5 7-5M9 14q1-2 4-2" />
            </svg>
            <span>РУС</span>
            <time>11:30</time>
            <svg width="20" height="20" viewBox="0 0 20 20">
               <path d="M2 4h14v12h-4v4l-3-4H2z" fill="#fff" />
               <path d="M5 7h9M5 10h9" stroke="#222" />
            </svg>
         </Tray>
      </Taskbar>
   );
}

export default function App() {
   return (
      <Desktop>
         <GlobalStyle />
         <Screen>
            <TopBars />
            <TitleBar>
               <Glyph name="processing" size={15} />
               <Title>{'Обработка  Печать ценников'}</Title>
               <WindowButtons>
                  <IconButton aria-label="Свернуть"><Glyph name="minimize" /></IconButton>
                  <IconButton aria-label="Восстановить"><Glyph name="restore" /></IconButton>
                  <IconButton aria-label="Закрыть окно"><Glyph name="close" /></IconButton>
               </WindowButtons>
            </TitleBar>
            <ActionBar>
               <TextButton type="button">Действия<Caret /></TextButton>
               <Sep />
               <Tools width={16} names="help" />
            </ActionBar>
            <Form onSubmit={(event) => event.preventDefault()}>
               <FieldRow>
                  <Label htmlFor="org" $width={68}>Организация:</Label>
                  <Field id="org" label="Организация" grow={671} value="ИП Поляков Леонид Вячеславович" buttons={['pick', 'find']} />
                  <Label htmlFor="price" $width={44} $left={8}>Тип цен:</Label>
                  <Field id="price" label="Тип цен" grow={780} value="Основная цена продажи" buttons={['pick', 'find']} />
                  <Label htmlFor="currency" $width={43} $left={13}>Валюта:</Label>
                  <Field id="currency" label="Валюта" width={83} value="руб." buttons={['pick', 'find']} />
               </FieldRow>
               <SectionTitle>Отбор</SectionTitle>
               <Filters>
                  <TagKind>
                     <legend>Вид ценника</legend>
                     <SplitButton>
                        <SplitMain type="button">
                           <Glyph name="printTeal" />
                           <span>Выберите ценник!</span>
                        </SplitMain>
                        <SplitArrow type="button" aria-label="Список ценников"><Caret /></SplitArrow>
                        <PriceTagMenu />
                        <Pointer width="13" height="19" viewBox="0 0 14 20">
                           <path d="M1 1v15l3.500-3 2.500 6 3-1-2.500-6H12z" fill="#fff" stroke="#222" />
                        </Pointer>
                     </SplitButton>
                  </TagKind>
                  <Checks>
                     <CheckLabel $height={15}><Check defaultChecked />Только имеющиеся в наличии</CheckLabel>
                     <Strip $top={3}>
                        <Label htmlFor="discount" $width={93}>Установка скидок:</Label>
                        <Field id="discount" label="Установка скидок" grow={1} buttons={['pick', 'clear']} />
                     </Strip>
                     <CheckLabel><Check />Оставить только из установки скидок</CheckLabel>
                     <CheckLabel $disabled><Check disabled />Основные средства</CheckLabel>
                  </Checks>
               </Filters>
               <PeriodRow>
                  <Label htmlFor="from" $width={121}>Период изменения цен с:</Label>
                  <Field id="from" label="Начало" width={92} value="  .  ." buttons={['date']} />
                  <Label htmlFor="to" $width={18} $left={6}>по:</Label>
                  <Field id="to" label="Конец" width={92} value="  .  ." buttons={['date']} />
                  <PeriodButton type="button" disabled>...</PeriodButton>
               </PeriodRow>
               <TableTools $height={30} $top={4}>
                  <Tools width={79} names="add remove checkAll uncheckAll" />
               </TableTools>
               <TableFrame $grow={251}>
                  <FilterTable />
               </TableFrame>
               <Splitter />
               <TableTools $height={24}>
                  <Tools width={182} names="add addPage pencil remove save up down sortUp sortDown" />
                  <Sep />
                  <Tools width={57} names="checkAll uncheckAll invert" />
                  <Sep />
                  <TextButton type="button">Заполнить<Caret /></TextButton>
                  <Sep />
                  <TextButton type="button">Подбор</TextButton>
               </TableTools>
               <TableFrame $grow={355}>
                  <GoodsTable />
               </TableFrame>
               <CloseBar>
                  <Watermark>
                     <strong>Активация Windows</strong>
                     Чтобы активировать Windows, перейдите в раздел "Параметры".
                  </Watermark>
                  <Sep />
                  <TextButton type="button">Закрыть</TextButton>
               </CloseBar>
            </Form>
            <WindowTabs>
               <WindowTab><Glyph name="sheet" size={14} />Переоценки товаров в роз...</WindowTab>
               <WindowTab><Glyph name="sheet" size={14} />...: переоценка в рознице. ...</WindowTab>
               <WindowTab $active><Glyph name="processing" size={14} />{'Обработка  Печать ценников'}</WindowTab>
            </WindowTabs>
            <StatusBar>
               <StatusCell $off>CAP</StatusCell>
               <StatusCell>NUM</StatusCell>
            </StatusBar>
            <SystemTaskbar />
         </Screen>
         <Gutter>
            <SideKnob type="button" aria-label="Панель" />
         </Gutter>
      </Desktop>
   );
}
